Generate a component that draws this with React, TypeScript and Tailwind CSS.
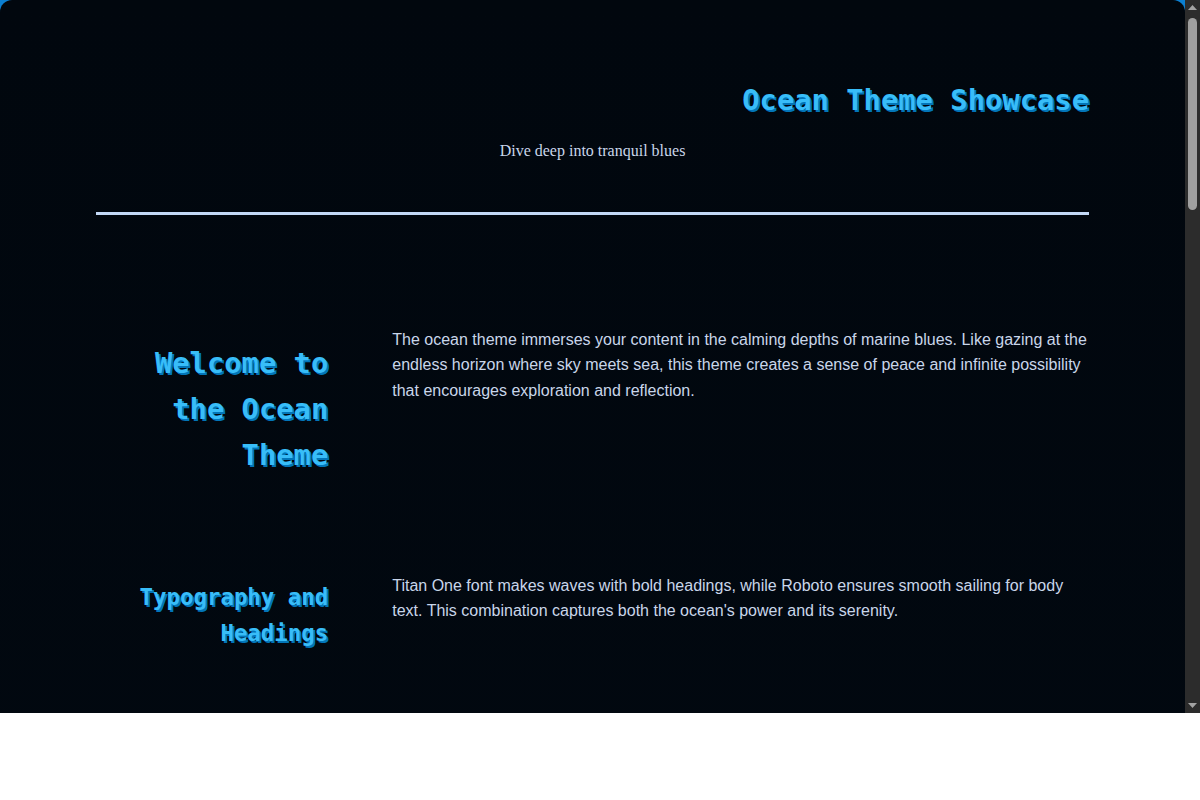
import React from "react";

const sections = [
  {
    title: "Welcome to the Ocean Theme",
    size: "text-[28.8px]",
    offset: "mt-[13px]",
    body: "The ocean theme immerses your content in the calming depths of marine blues. Like gazing at the endless horizon where sky meets sea, this theme creates a sense of peace and infinite possibility that encourages exploration and reflection.",
  },
  {
    title: "Typography and Headings",
    size: "text-[22.4px]",
    offset: "mt-[7px]",
    body: "Titan One font makes waves with bold headings, while Roboto ensures smooth sailing for body text. This combination captures both the ocean's power and its serenity.",
  },
  {
    title: "Colour Palette",
    size: "text-[22.4px]",
    offset: "mt-[7px]",
    body: "Deep navy backgrounds hold bright cyan accents, the way sunlight glints on the surface of the water. Soft blue-grey text keeps long passages easy on the eyes.",
  },
  {
    title: "Currents and Layout",
    size: "text-[22.4px]",
    offset: "mt-[7px]",
    body: "Generous spacing lets each section breathe like open water. Headings anchor the left side while the text flows freely beside them, guiding the reader downstream.",
  },
  {
    title: "Depth and Shadow",
    size: "text-[22.4px]",
    offset: "mt-[7px]",
    body: "Layered shadows under the headings suggest light refracting through the waves, adding depth without breaking the calm of the page.",
  },
  {
    title: "Set Sail",
    size: "text-[22.4px]",
    offset: "mt-[7px]",
    body: "Use the ocean theme wherever you want your readers to slow down, take a breath and drift through your content at their own pace.",
  },
];

function ScrollArrow({ down }: { down?: boolean }) {
  return (
    <div className="flex h-[15px] items-center justify-center">
      <svg width="9" height="5" viewBox="0 0 9 5">
        {down ? (
          <polygon points="0,0 9,0 4.5,5" fill="#a3a3a3" />
        ) : (
          <polygon points="4.5,0 9,5 0,5" fill="#a3a3a3" />
        )}
      </svg>
    </div>
  );
}

export default function App() {
  return (
    <div className="flex h-[713px] w-[1200px] bg-[#0b7fd1]">
      {/* ---------------- Page ---------------- */}
      <div className="h-full flex-1 overflow-hidden">
        <div className="min-h-[2536px] rounded-xl bg-gradient-to-b from-[#01070e] to-[#030b14] px-24 pt-[77px] pb-[180px]">
          <header>
            <h1 className="text-right font-['DejaVu_Sans_Mono',monospace] text-[28.8px] font-bold leading-[1.6] text-[#38bdf8] [text-shadow:2px_2px_0_#0275b8]">
              Ocean Theme Showcase
            </h1>
            <p className="mt-[15px] text-center font-['Liberation_Serif',serif] text-base leading-[1.6] text-[#c9d6ea]">
              Dive deep into tranquil blues
            </p>
            <hr className="mt-[48px] h-[3px] border-0 bg-[#c3d9f6]" />
          </header>

          <main className="mt-[112px] flex flex-col gap-[95px]">
            {sections.map((s) => (
              <section
                key={s.title}
                className="grid grid-cols-[1fr_3fr] items-start gap-16"
              >
                <h2
                  className={`${s.offset} ${s.size} text-right font-['DejaVu_Sans_Mono',monospace] font-bold leading-[1.6] text-[#38bdf8] [text-shadow:2px_2px_0_#0275b8]`}
                >
                  {s.title}
                </h2>
                <p className="font-['Liberation_Sans',Arial,sans-serif] text-base leading-[1.6] text-[#c9d6ea]">
                  {s.body}
                </p>
              </section>
            ))}
          </main>

          <footer className="mt-[160px] border-t border-[#1e3a5f] pt-8 text-center font-['Liberation_Sans',Arial,sans-serif] text-sm text-[#7d93b2]">
            Ocean Theme · Calm waters ahead
          </footer>
        </div>
      </div>

      {/* ---------------- Scrollbar ---------------- */}
      <div className="flex w-[15px] flex-col bg-[#2c2c2c]">
        <ScrollArrow />
        <div className="flex-1 px-[3px] pt-[3px]">
          <div className="h-[192px] rounded-full bg-[#9f9f9f]" />
        </div>
        <ScrollArrow down />
      </div>
    </div>
  );
}
